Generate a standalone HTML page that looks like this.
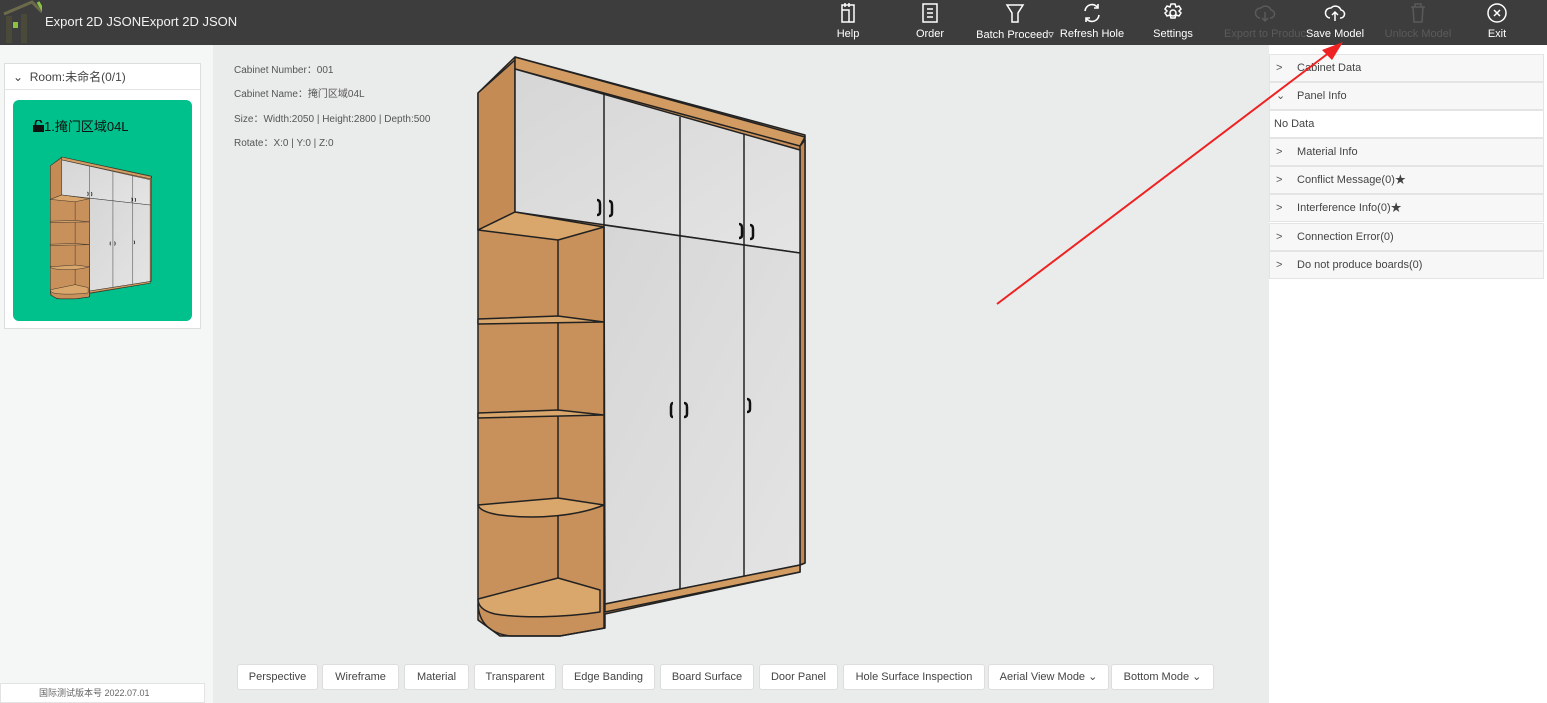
<!DOCTYPE html>
<html><head><meta charset="utf-8"><style>
*{box-sizing:border-box;margin:0;padding:0}
body{width:1547px;height:703px;overflow:hidden;background:#eaeceb;font-family:"Liberation Sans","Noto Sans CJK SC",sans-serif;position:relative;color:#333}
.top{position:absolute;left:0;top:0;width:1547px;height:45px;background:#3d3d3d;color:#fff}
.title{position:absolute;left:45px;top:14px;font-size:13px;color:#f2f2f2}
.tb{position:absolute;top:0;width:90px;margin-left:-45px;text-align:center;font-size:11px;color:#fff}
.tb svg{display:block;margin:2px auto 0;width:22px;height:22px}
.tb span{display:block;margin-top:4px;white-space:nowrap}
.dim{color:#5a5a5a}
.left{position:absolute;left:0;top:45px;width:213px;height:658px;background:#f5f6f6}
.room{position:absolute;left:4px;top:63px;width:197px;height:266px;background:#fff;border:1px solid #ddd}
.room .hd{height:26px;border-bottom:1px solid #e3e3e3;font-size:12px;line-height:26px;padding-left:8px;color:#444}
.card{position:absolute;left:8px;top:36px;width:179px;height:221px;background:#00c08b;border-radius:6px}
.card .t{position:absolute;left:20px;top:16px;font-size:13px;color:#111}
.info{position:absolute;left:234px;font-size:10px;color:#555}
.right{position:absolute;left:1264px;top:45px;width:283px;height:658px;background:#fff}
.row{position:absolute;left:5px;width:275px;height:28px;background:#f7f7f7;border:1px solid #e4e4e4;font-size:11px;line-height:27px;padding-left:24px;color:#444}
.row i{position:absolute;left:6px;font-style:normal;color:#555}
.btn{position:absolute;top:664px;height:26px;background:#fff;border:1px solid #ddd;border-radius:3px;font-size:11px;line-height:24px;text-align:center;color:#444}
</style></head><body>
<div class="top">
<svg style="position:absolute;left:2px;top:0" width="40" height="45" viewBox="0 0 40 45"><path d="M2 14 L30 2 L40 12" stroke="#6b6b4b" stroke-width="3" fill="none"/><path d="M36 2 L42 12" stroke="#8ac43f" stroke-width="3"/><rect x="4" y="16" width="6" height="27" fill="#4a4a3a"/><rect x="19" y="14" width="6" height="29" fill="#4a4a3a"/><rect x="11" y="22" width="5" height="6" fill="#8ac43f"/></svg>
<div class="title">Export 2D JSONExport 2D JSON</div>
<div class="tb" style="left:848px"><svg viewBox="0 0 22 22" fill="none" stroke="#fff" stroke-width="1.5"><rect x="5" y="3" width="12" height="17"/><path d="M8 1v4M12 1v4M5 8h7v12"/></svg><span>Help</span></div>
<div class="tb" style="left:930px"><svg viewBox="0 0 22 22" fill="none" stroke="#fff" stroke-width="1.5"><rect x="4" y="2" width="14" height="18"/><path d="M8 7h6M8 11h6M8 15h6"/></svg><span>Order</span></div>
<div class="tb" style="left:1015px"><svg viewBox="0 0 22 22" fill="none" stroke="#fff" stroke-width="1.5"><path d="M3 3h16l-5 8v9h-6v-9z"/></svg><span>Batch Proceed▿</span></div>
<div class="tb" style="left:1092px"><svg viewBox="0 0 22 22" fill="none" stroke="#fff" stroke-width="1.6"><path d="M4 9a7 7 0 0 1 13-3M18 13a7 7 0 0 1-13 3"/><path d="M17 2v4h-4M5 20v-4h4"/></svg><span>Refresh Hole</span></div>
<div class="tb" style="left:1173px"><svg viewBox="0 0 22 22" fill="none" stroke="#fff" stroke-width="1.5"><circle cx="11" cy="11" r="3"/><path d="M9 2h4l1 3 3-1 2 3-2 2 2 2-2 3-3-1-1 3h-4l-1-3-3 1-2-3 2-2-2-2 2-3 3 1z"/></svg><span>Settings</span></div>
<div class="tb dim" style="left:1265px"><svg viewBox="0 0 22 22" fill="none" stroke="#5a5a5a" stroke-width="1.5"><path d="M6 16a5 5 0 0 1 1-10 6 6 0 0 1 10 2 4 4 0 0 1-1 8M11 10v9M8 16l3 3 3-3"/></svg><span>Export to Produc</span></div>
<div class="tb" style="left:1335px"><svg viewBox="0 0 22 22" fill="none" stroke="#fff" stroke-width="1.5"><path d="M6 16a5 5 0 0 1 1-10 6 6 0 0 1 10 2 4 4 0 0 1-1 8M11 19v-9M8 13l3-3 3 3"/></svg><span>Save Model</span></div>
<div class="tb dim" style="left:1418px"><svg viewBox="0 0 22 22" fill="none" stroke="#5a5a5a" stroke-width="1.5"><path d="M4 5h14M8 5V2h6v3M6 5l1 15h8l1-15"/></svg><span>Unlock Model</span></div>
<div class="tb" style="left:1497px"><svg viewBox="0 0 22 22" fill="none" stroke="#fff" stroke-width="1.5"><circle cx="11" cy="11" r="9"/><path d="M8 8l6 6M14 8l-6 6"/></svg><span>Exit</span></div>
</div>
<div class="left">
<div class="room" style="top:18px"><div class="hd">⌄&nbsp;&nbsp;Room:未命名(0/1)</div>
<div class="card"><div class="t"><svg width="11" height="12" viewBox="0 0 11 12" style="vertical-align:-1px"><rect x="0" y="5" width="11" height="7" fill="#111"/><path d="M2.5 5V3a3 3 0 0 1 6 0" stroke="#111" stroke-width="1.6" fill="none"/></svg>1.掩门区域04L</div></div></div>
<div style="position:absolute;left:0;top:638px;width:205px;height:20px;background:#fff;border:1px solid #e3e3e3;font-size:9px;color:#666;padding-left:38px;line-height:18px;overflow:hidden">国际测试版本号 2022.07.01</div>
</div>
<div class="info" style="top:61px">Cabinet Number：001</div>
<div class="info" style="top:85px">Cabinet Name：掩门区域04L</div>
<div class="info" style="top:110px">Size：Width:2050 | Height:2800 | Depth:500</div>
<div class="info" style="top:134px">Rotate：X:0 | Y:0 | Z:0</div>
<svg style="position:absolute;left:0;top:0" width="1547" height="703">
<defs><linearGradient id="d" x1="0" y1="0" x2="1" y2="1"><stop offset="0" stop-color="#d6d6d6"/><stop offset="1" stop-color="#e4e4e4"/></linearGradient></defs>
<g id="cab">
<g stroke="#222" stroke-width="1.5" stroke-linejoin="round">
<polygon points="478,93 515,57 805,135 805,563 800,565 800,572 605,614 605,628 560,636 500,636 478,620" fill="#c8905a"/>
<polygon points="478,93 515,60 515,212 478,230" fill="#c48b55"/>
<polygon points="515,57 805,137 800,146 515,69" fill="#d29b62"/>
<polygon points="800,146 805,140 805,563 800,565" fill="#c28852"/>
<polygon points="515,69 800,150 800,253 515,212" fill="url(#d)"/>
<line x1="604" y1="94" x2="604" y2="225"/><line x1="680" y1="117" x2="680" y2="236"/><line x1="744" y1="134" x2="744" y2="245"/>
<polygon points="604,225 800,253 800,565 605,604" fill="url(#d)"/>
<line x1="680" y1="236" x2="680" y2="589"/><line x1="744" y1="245" x2="744" y2="576"/>
<polygon points="605,604 800,565 800,572 605,612" fill="#d29b62"/>
<polygon points="478,230 515,212 604,227 558,240" fill="#d9a66b"/>
<line x1="558" y1="240" x2="558" y2="592"/><line x1="604" y1="227" x2="604" y2="628"/>
<polygon points="478,319 558,316 604,322 478,324" fill="#d9a66b"/>
<polygon points="478,413 558,410 604,415 478,418" fill="#d9a66b"/>
<path d="M478,505 L558,498 604,505 C580,515 540,520 500,515 Q480,512 478,505Z" fill="#d9a66b"/>
<path d="M478,599 L558,578 600,590 600,612 C560,618 520,618 495,614 Q478,610 478,599Z" fill="#d9a66b"/>
<path d="M478,605 Q480,632 510,636 L560,636 605,628" fill="none"/>
</g>
<g stroke="#111" stroke-width="2.5" fill="none">
<path d="M597,200 q3,0 3,4 v8 q0,3 -3,3"/><path d="M609,201 q3,0 3,4 v8 q0,3 -3,3"/>
<path d="M739,224 q3,0 3,4 v7 q0,3 -3,3"/><path d="M750,225 q3,0 3,4 v7 q0,3 -3,3"/>
<path d="M673,403 q-2,0 -2,4 v7 q0,3 2,3"/><path d="M684,403 q3,0 3,4 v7 q0,3 -3,3"/>
<path d="M747,399 q3,0 3,4 v6 q0,3 -3,3"/>
</g>
</g>
<use href="#cab" transform="translate(50,157) scale(0.31,0.245) translate(-477,-57)"/>
</svg>
<div class="right">
<div class="row" style="top:9px"><i>&gt;</i>&nbsp;Cabinet Data</div>
<div class="row" style="top:37px"><i>⌄</i>&nbsp;Panel Info</div>
<div class="row" style="top:65px;background:#fff;padding-left:4px">No Data</div>
<div class="row" style="top:93px"><i>&gt;</i>&nbsp;Material Info</div>
<div class="row" style="top:121px"><i>&gt;</i>&nbsp;Conflict Message(0)★</div>
<div class="row" style="top:149px"><i>&gt;</i>&nbsp;Interference Info(0)★</div>
<div class="row" style="top:178px"><i>&gt;</i>&nbsp;Connection Error(0)</div>
<div class="row" style="top:206px"><i>&gt;</i>&nbsp;Do not produce boards(0)</div>
</div>
<div style="position:absolute;left:1264px;top:45px;width:5px;height:658px;background:#eaeceb"></div>
<svg style="position:absolute;left:0;top:0" width="1547" height="703">
<line x1="997" y1="304" x2="1330" y2="52" stroke="#ee2222" stroke-width="2"/>
<polygon points="1343,42 1322,50 1332,60" fill="#ee2222"/>
</svg>
<div class="btn" style="left:237px;width:81px">Perspective</div>
<div class="btn" style="left:322px;width:77px">Wireframe</div>
<div class="btn" style="left:404px;width:65px">Material</div>
<div class="btn" style="left:474px;width:82px">Transparent</div>
<div class="btn" style="left:562px;width:93px">Edge Banding</div>
<div class="btn" style="left:660px;width:94px">Board Surface</div>
<div class="btn" style="left:759px;width:79px">Door Panel</div>
<div class="btn" style="left:843px;width:142px">Hole Surface Inspection</div>
<div class="btn" style="left:988px;width:121px">Aerial View Mode ⌄</div>
<div class="btn" style="left:1111px;width:103px">Bottom Mode ⌄</div>
</body></html>
